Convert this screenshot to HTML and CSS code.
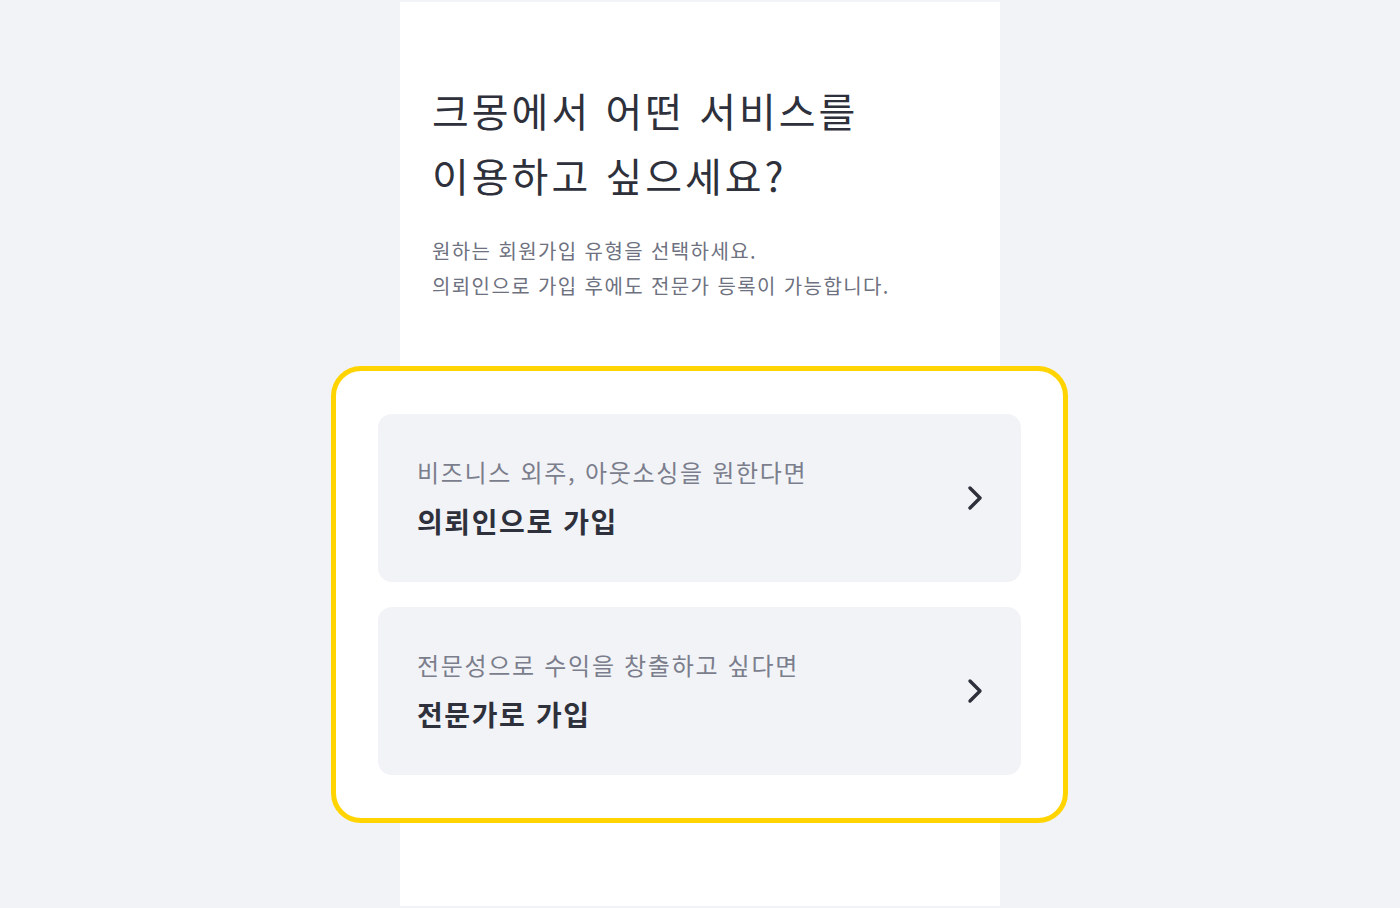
FILE: index.html
```html
<!DOCTYPE html>
<html lang="ko">
<head>
    <meta charset="UTF-8">
    <meta name="viewport" content="width=device-width, initial-scale=1.0">
    <title>회원가입 유형 선택</title>
    <link rel="stylesheet" href="styles.css">
</head>
<body>

<div class="signup-page">
    <!-- Heading -->
    <h1 class="title">크몽에서 어떤 서비스를<br>이용하고 싶으세요?</h1>
    <p class="desc">원하는 회원가입 유형을 선택하세요.<br>의뢰인으로 가입 후에도 전문가 등록이 가능합니다.</p>

    <!-- Member type options -->
    <div class="type-box">
        <a class="type-card" href="#">
            <div class="type-text">
                <span class="type-sub">비즈니스 외주, 아웃소싱을 원한다면</span>
                <span class="type-name">의뢰인으로 가입</span>
            </div>
            <svg class="chevron" width="16" height="26" viewBox="0 0 16 26">
                <polyline points="3,3 13,13 3,23" fill="none" stroke="#2e313b" stroke-width="3.4" stroke-linecap="round" stroke-linejoin="round"/>
            </svg>
        </a>
        <a class="type-card" href="#">
            <div class="type-text">
                <span class="type-sub">전문성으로 수익을 창출하고 싶다면</span>
                <span class="type-name">전문가로 가입</span>
            </div>
            <svg class="chevron" width="16" height="26" viewBox="0 0 16 26">
                <polyline points="3,3 13,13 3,23" fill="none" stroke="#2e313b" stroke-width="3.4" stroke-linecap="round" stroke-linejoin="round"/>
            </svg>
        </a>
    </div>
</div>

</body>
</html>
```

FILE: styles.css
```css
body {
    font-family: 'Noto Sans CJK KR', 'Noto Sans', sans-serif;
    background-color: #F2F3F7;
    color: #2E313B;
    margin: 0;
    padding: 2px 0;
    display: flex;
    justify-content: center;
}

.signup-page {
    background-color: #FFFFFF;
    width: 600px;
    height: 904px;
    box-sizing: border-box;
    padding: 76px 32px 0;
}

.title {
    font-size: 40px;
    font-weight: 400;
    line-height: 65px;
    letter-spacing: 3px;
    margin: 0;
    color: #2E313B;
}

.desc {
    font-size: 20px;
    line-height: 35px;
    letter-spacing: 1.4px;
    color: #6E7180;
    margin: 25px 0 0;
}

.type-box {
    margin: 63px -100px 0 -101px;
    border: 5px solid #FFD400;
    border-radius: 30px;
    background-color: #FFFFFF;
    padding: 43px 42px;
    display: flex;
    flex-direction: column;
    gap: 25px;
}

.type-card {
    background-color: #F2F3F7;
    border-radius: 14px;
    height: 168px;
    padding: 0 38px 0 39px;
    box-sizing: border-box;
    display: flex;
    align-items: center;
    justify-content: space-between;
    text-decoration: none;
}

.type-text {
    display: flex;
    flex-direction: column;
}

.type-sub {
    font-size: 24px;
    line-height: 36px;
    letter-spacing: 1.7px;
    color: #7B7E8C;
}

.type-name {
    font-size: 28px;
    font-weight: 700;
    line-height: 42px;
    letter-spacing: 1.6px;
    margin-top: 10px;
    color: #2E313B;
}

.chevron {
    flex-shrink: 0;
}
```
